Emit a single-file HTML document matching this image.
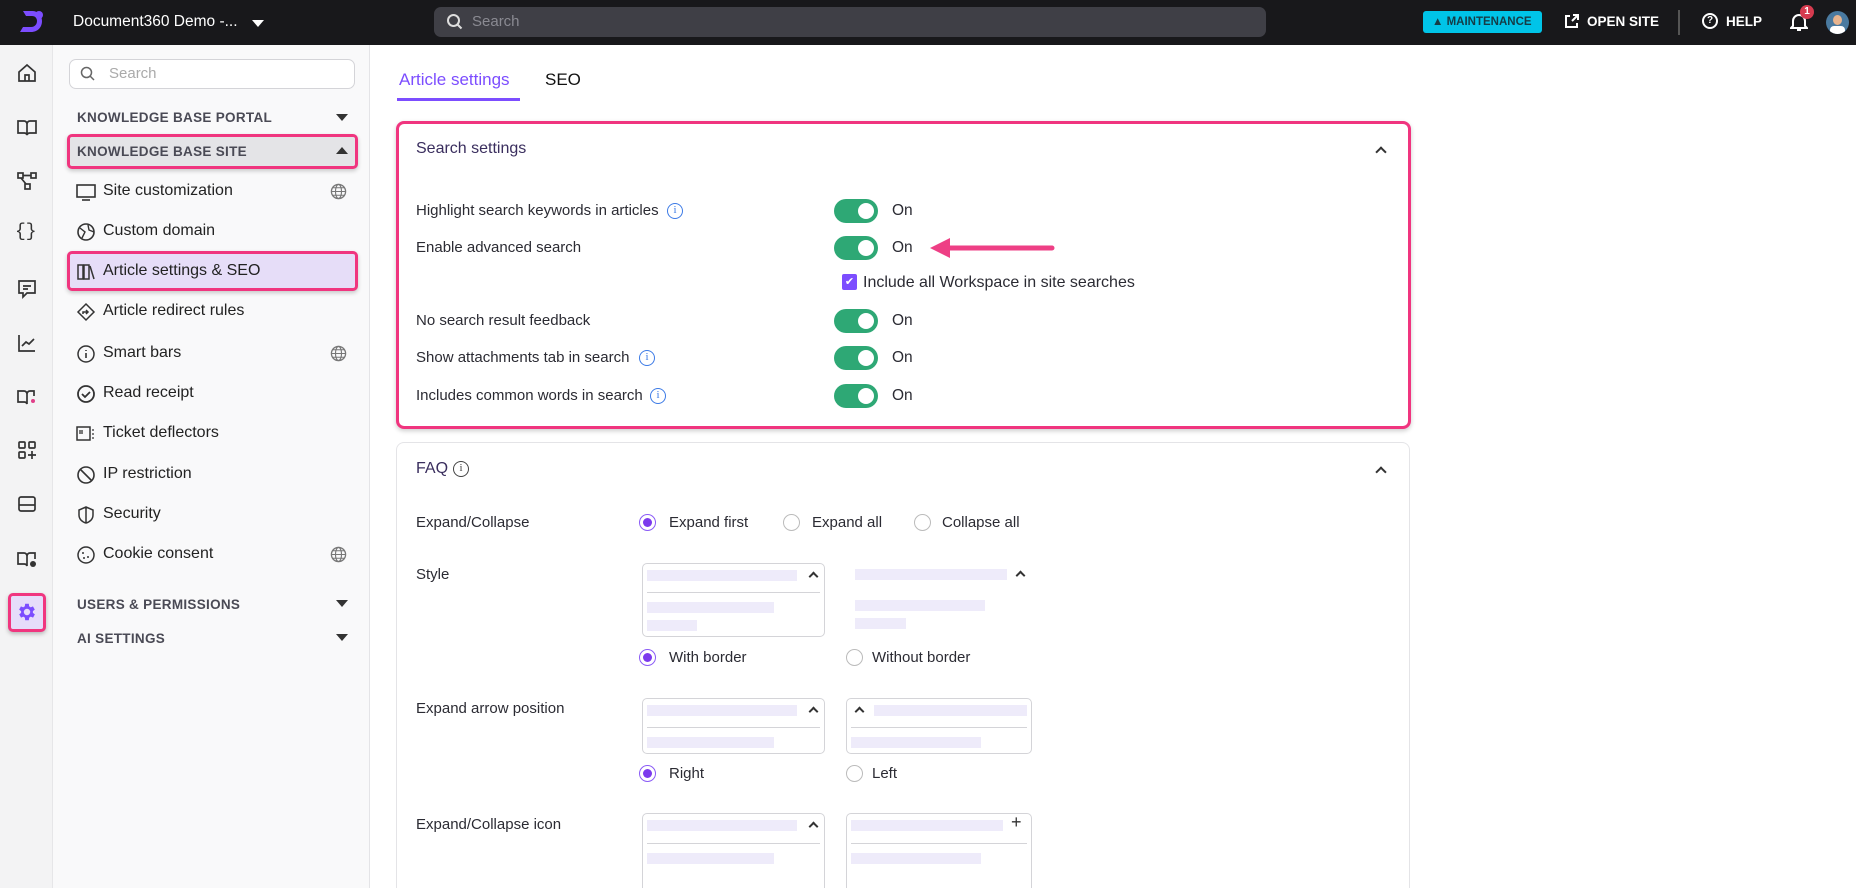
<!DOCTYPE html>
<html><head><meta charset="utf-8"><style>
*{box-sizing:border-box;margin:0;padding:0}
html,body{width:1856px;height:888px;overflow:hidden}
body{background:#fff;font-family:"Liberation Sans",sans-serif;color:#2b2b33;position:relative}
.a{position:absolute}
.top{left:0;top:0;width:1856px;height:45px;background:#18181b}
.rail{left:0;top:45px;width:53px;height:843px;background:#f3f3f4;border-right:1px solid #e6e6e8}
.side{left:53px;top:45px;width:317px;height:843px;background:#f9f9fa;border-right:1px solid #e4e4e7}
.hd{font-size:13.5px;font-weight:bold;color:#4a4a55;letter-spacing:.3px}
.it{font-size:16px;color:#222;left:103px}
.ic{left:76px;width:20px;height:20px}
.tri{width:0;height:0;border-left:6px solid transparent;border-right:6px solid transparent;border-top:7px solid #333}
.triu{width:0;height:0;border-left:6px solid transparent;border-right:6px solid transparent;border-bottom:7px solid #333}
.glb{left:330px;width:17px;height:17px}
.lbl{font-size:15px;color:#2b2b33}
.tg{left:834px;width:44px;height:24px;border-radius:12px;background:#2ea875}
.tg:after{content:"";position:absolute;right:4px;top:4px;width:16px;height:16px;border-radius:50%;background:#fff}
.on{left:892px;font-size:15.5px}
.inf{width:16px;height:16px;border:1.5px solid #3d7be6;border-radius:50%;color:#3d7be6;font-size:11px;text-align:center;line-height:13px;font-family:"Liberation Serif",serif}
.rd{width:17px;height:17px;border-radius:50%;border:1.5px solid #bbb;background:#fff}
.rd.s{border:1.5px solid #8b5cf6}
.rd.s:after{content:"";position:absolute;left:2.5px;top:2.5px;width:9px;height:9px;border-radius:50%;background:#7c3aed}
.bx{border:1.5px solid #d4d4d8;border-radius:5px}
.bar{background:#eeebfa;height:11px}
.ln{height:1px;background:#d4d4d8}
.chev{width:8px;height:8px;border-left:2px solid #333;border-top:2px solid #333;transform:rotate(45deg)}
.ri{left:16px;width:22px;height:22px}
</style></head><body>
<div class="a top"></div>
<svg class="a" style="left:18px;top:9px" width="28" height="26" viewBox="0 0 28 26"><path d="M5 2h9c6 0 10 4 10 10s-4 11-11 11H2l3-5h8c4 0 6-3 6-6s-2-5-5-5H8z" fill="#7c4dff"/><circle cx="21" cy="6" r="4" fill="#7c4dff"/></svg>
<div class="a" style="left:73px;top:13px;color:#fff;font-size:15.5px">Document360 Demo -...</div>
<div class="a tri" style="left:252px;top:20px;border-top-color:#fff"></div>
<div class="a" style="left:434px;top:7px;width:832px;height:30px;background:#3f3f46;border-radius:7px"></div>
<svg class="a" style="left:446px;top:13px" width="18" height="18"><circle cx="7.5" cy="7.5" r="5.5" stroke="#ddd" stroke-width="2" fill="none"/><path d="M11.5 11.5l4 4" stroke="#ddd" stroke-width="2"/></svg>
<div class="a" style="left:472px;top:13px;color:#8a8a92;font-size:15px">Search</div>
<div class="a" style="left:1423px;top:11px;width:119px;height:22px;background:#00c4e8;border-radius:3px;font-size:11.5px;font-weight:bold;color:#153c46;line-height:22px;padding-left:9px">▲ MAINTENANCE</div>
<svg class="a" style="left:1564px;top:14px" width="15" height="15"><path d="M6 2H2v11h11V9M8 7l6-6M9 1h5v5" stroke="#fff" stroke-width="2" fill="none"/></svg>
<div class="a" style="left:1587px;top:14px;color:#fff;font-size:13.5px;font-weight:bold">OPEN SITE</div>
<div class="a" style="left:1678px;top:10px;width:2px;height:25px;background:#555"></div>
<div class="a" style="left:1702px;top:13px;width:16px;height:16px;border:2px solid #fff;border-radius:50%;color:#fff;font-size:10px;font-weight:bold;text-align:center;line-height:12px">?</div>
<div class="a" style="left:1726px;top:14px;color:#fff;font-size:13.5px;font-weight:bold">HELP</div>
<svg class="a" style="left:1790px;top:12px" width="18" height="20"><path d="M3 14V9a6 6 0 0112 0v5l2 2H1zM7 18h4" stroke="#fff" stroke-width="2" fill="none"/></svg>
<div class="a" style="left:1800px;top:5px;width:14px;height:14px;border-radius:50%;background:#d63b4f;color:#fff;font-size:10px;text-align:center;line-height:14px;font-weight:bold">1</div>
<div class="a" style="left:1826px;top:11px;width:23px;height:23px;border-radius:50%;background:#4a7aa0;overflow:hidden"><div class="a" style="left:7px;top:4px;width:9px;height:10px;border-radius:50%;background:#e8b48e"></div><div class="a" style="left:4px;top:15px;width:15px;height:10px;background:#fff;border-radius:4px"></div></div>

<div class="a rail"></div>
<svg class="a ri" style="top:62px" viewBox="0 0 22 22"><path d="M3 10l8-7 8 7v9H3zM9 19v-6h4v6" stroke="#333" stroke-width="1.7" fill="none"/></svg>
<svg class="a ri" style="top:116px" viewBox="0 0 22 22"><path d="M2 5h6a3 3 0 013 3v11a3 3 0 00-3-2H2zM20 5h-6a3 3 0 00-3 3v11a3 3 0 013-2h6z" stroke="#333" stroke-width="1.7" fill="none"/></svg>
<svg class="a ri" style="top:170px" viewBox="0 0 22 22"><rect x="2" y="3" width="5" height="5" stroke="#333" stroke-width="1.7" fill="none"/><rect x="15" y="3" width="5" height="5" stroke="#333" stroke-width="1.7" fill="none"/><rect x="9" y="14" width="5" height="5" stroke="#333" stroke-width="1.7" fill="none"/><path d="M7 5.5h8M5 8l5 6" stroke="#333" stroke-width="1.7"/></svg>
<div class="a" style="left:15px;top:222px;font-size:18px;color:#333;font-family:'Liberation Mono',monospace">{}</div>
<svg class="a ri" style="top:278px" viewBox="0 0 22 22"><path d="M3 3h16v12h-8l-4 4v-4H3z M7 8h8M7 11h5" stroke="#333" stroke-width="1.7" fill="none"/></svg>
<svg class="a ri" style="top:332px" viewBox="0 0 22 22"><path d="M3 3v16h16M6 14l4-4 3 2 5-5" stroke="#333" stroke-width="1.7" fill="none"/></svg>
<svg class="a ri" style="top:386px" viewBox="0 0 22 22"><path d="M2 5h6a3 3 0 013 3v10a3 3 0 00-3-2H2zM11 8a3 3 0 013-3h4v5" stroke="#333" stroke-width="1.7" fill="none"/><circle cx="17" cy="15" r="2" fill="#e0408a"/></svg>
<svg class="a ri" style="top:439px" viewBox="0 0 22 22"><rect x="3" y="3" width="6" height="6" stroke="#333" stroke-width="1.7" fill="none" rx="1"/><rect x="13" y="3" width="6" height="6" stroke="#333" stroke-width="1.7" fill="none" rx="1"/><rect x="3" y="13" width="6" height="6" stroke="#333" stroke-width="1.7" fill="none" rx="1"/><path d="M16 12v8M12 16h8" stroke="#333" stroke-width="1.7"/></svg>
<svg class="a ri" style="top:493px" viewBox="0 0 22 22"><rect x="3" y="4" width="16" height="14" rx="2" stroke="#333" stroke-width="1.7" fill="none"/><path d="M3 12h16" stroke="#333" stroke-width="1.7"/></svg>
<svg class="a ri" style="top:548px" viewBox="0 0 22 22"><path d="M2 5h6a3 3 0 013 3v10a3 3 0 00-3-2H2zM11 8a3 3 0 013-3h5v6" stroke="#333" stroke-width="1.7" fill="none"/><circle cx="17" cy="16" r="3" fill="#333"/></svg>
<div class="a" style="left:8px;top:593px;width:38px;height:39px;border:3px solid #f0357f;border-radius:5px;background:#e6dcfa;box-shadow:0 2px 4px rgba(0,0,0,.25)"></div>
<svg class="a" style="left:16px;top:601px" width="22" height="22" viewBox="0 0 24 24"><path fill="#7c4dff" d="M19.4 13a7.5 7.5 0 000-2l2.1-1.6-2-3.5-2.5 1a7.3 7.3 0 00-1.7-1L15 3h-4l-.4 2.9a7.3 7.3 0 00-1.7 1l-2.5-1-2 3.5L6.6 11a7.5 7.5 0 000 2l-2.1 1.6 2 3.5 2.5-1a7.3 7.3 0 001.7 1L11 21h4l.4-2.9a7.3 7.3 0 001.7-1l2.5 1 2-3.5zM13 15.5a3.5 3.5 0 110-7 3.5 3.5 0 010 7z" transform="translate(-1 0)"/></svg>

<div class="a side"></div>
<div class="a" style="left:69px;top:59px;width:286px;height:30px;border:1px solid #d4d4d8;border-radius:7px;background:#fff"></div>
<svg class="a" style="left:80px;top:66px" width="16" height="16"><circle cx="6.5" cy="6.5" r="5" stroke="#666" stroke-width="1.5" fill="none"/><path d="M10 10l4 4" stroke="#666" stroke-width="1.5"/></svg>
<div class="a" style="left:109px;top:65px;color:#aaa;font-size:15px">Search</div>
<div class="a hd" style="left:77px;top:110px">KNOWLEDGE BASE PORTAL</div>
<div class="a tri" style="left:336px;top:114px"></div>
<div class="a" style="left:67px;top:134px;width:291px;height:35px;background:#e4e4e7;border:3px solid #f0357f;border-radius:5px;box-shadow:0 2px 4px rgba(0,0,0,.2)"></div>
<div class="a hd" style="left:77px;top:144px">KNOWLEDGE BASE SITE</div>
<div class="a triu" style="left:336px;top:147px"></div>
<div class="a" style="left:67px;top:251px;width:291px;height:40px;background:#e6ddf8;border:3px solid #f0357f;border-radius:5px;box-shadow:0 2px 4px rgba(0,0,0,.2)"></div>
<div class="a it" style="top:182px">Site customization</div>
<div class="a it" style="top:222px">Custom domain</div>
<div class="a it" style="top:262px">Article settings &amp; SEO</div>
<div class="a it" style="top:302px">Article redirect rules</div>
<div class="a it" style="top:344px">Smart bars</div>
<div class="a it" style="top:384px">Read receipt</div>
<div class="a it" style="top:424px">Ticket deflectors</div>
<div class="a it" style="top:465px">IP restriction</div>
<div class="a it" style="top:505px">Security</div>
<div class="a it" style="top:545px">Cookie consent</div>
<svg class="a glb" style="top:183px" viewBox="0 0 18 18"><circle cx="9" cy="9" r="7.5" stroke="#777" stroke-width="1.4" fill="none"/><ellipse cx="9" cy="9" rx="3.2" ry="7.5" stroke="#777" stroke-width="1.2" fill="none"/><path d="M1.5 9h15M3 5h12M3 13h12" stroke="#777" stroke-width="1.1"/></svg>
<svg class="a glb" style="top:345px" viewBox="0 0 18 18"><circle cx="9" cy="9" r="7.5" stroke="#777" stroke-width="1.4" fill="none"/><ellipse cx="9" cy="9" rx="3.2" ry="7.5" stroke="#777" stroke-width="1.2" fill="none"/><path d="M1.5 9h15M3 5h12M3 13h12" stroke="#777" stroke-width="1.1"/></svg>
<svg class="a glb" style="top:546px" viewBox="0 0 18 18"><circle cx="9" cy="9" r="7.5" stroke="#777" stroke-width="1.4" fill="none"/><ellipse cx="9" cy="9" rx="3.2" ry="7.5" stroke="#777" stroke-width="1.2" fill="none"/><path d="M1.5 9h15M3 5h12M3 13h12" stroke="#777" stroke-width="1.1"/></svg>
<svg class="a ic" style="top:182px" viewBox="0 0 20 20"><rect x="1" y="3" width="18" height="12" stroke="#333" stroke-width="1.6" fill="none"/><path d="M6 18h8" stroke="#333" stroke-width="1.6"/></svg>
<svg class="a ic" style="top:222px" viewBox="0 0 20 20"><circle cx="10" cy="10" r="8" stroke="#333" stroke-width="1.6" fill="none"/><path d="M4 6l5 4-3 6M12 3l1 5 5 2" stroke="#333" stroke-width="1.4" fill="none"/></svg>
<svg class="a ic" style="top:262px" viewBox="0 0 20 20"><rect x="2" y="3" width="5" height="14" stroke="#333" stroke-width="1.5" fill="none"/><rect x="8" y="3" width="5" height="14" stroke="#333" stroke-width="1.5" fill="none"/><path d="M14 4l4 13" stroke="#333" stroke-width="1.5"/></svg>
<svg class="a ic" style="top:302px" viewBox="0 0 20 20"><path d="M10 2l8 8-8 8-8-8z M7 12v-2h5M10 8l2 2-2 2" stroke="#333" stroke-width="1.5" fill="none"/></svg>
<svg class="a ic" style="top:344px" viewBox="0 0 20 20"><circle cx="10" cy="10" r="8" stroke="#333" stroke-width="1.5" fill="none"/><path d="M10 9v5M10 6v1" stroke="#333" stroke-width="1.6"/></svg>
<svg class="a ic" style="top:384px" viewBox="0 0 20 20"><circle cx="10" cy="10" r="8" stroke="#333" stroke-width="1.8" fill="none"/><path d="M6 10l3 3 5-5" stroke="#333" stroke-width="1.8" fill="none"/></svg>
<svg class="a ic" style="top:424px" viewBox="0 0 20 20"><rect x="1" y="3" width="13" height="13" stroke="#333" stroke-width="1.5" fill="none"/><path d="M4 6v4M6 6v4M16 6h2M16 10h2M16 14h2" stroke="#333" stroke-width="1.3"/></svg>
<svg class="a ic" style="top:465px" viewBox="0 0 20 20"><circle cx="10" cy="10" r="8" stroke="#333" stroke-width="1.6" fill="none"/><path d="M4.5 4.5l11 11" stroke="#333" stroke-width="1.6"/></svg>
<svg class="a ic" style="top:505px" viewBox="0 0 20 20"><path d="M10 2l7 3v5c0 4-3 7-7 8-4-1-7-4-7-8V5zM10 2v16" stroke="#333" stroke-width="1.5" fill="none"/></svg>
<svg class="a ic" style="top:545px" viewBox="0 0 20 20"><circle cx="10" cy="10" r="8" stroke="#333" stroke-width="1.5" fill="none"/><circle cx="7" cy="8" r="1" fill="#333"/><circle cx="12" cy="12" r="1" fill="#333"/><circle cx="8" cy="13" r="1" fill="#333"/></svg>
<div class="a hd" style="left:77px;top:597px">USERS &amp; PERMISSIONS</div><div class="a tri" style="left:336px;top:600px"></div>
<div class="a hd" style="left:77px;top:631px">AI SETTINGS</div><div class="a tri" style="left:336px;top:634px"></div>

<div class="a" style="left:399px;top:70px;font-size:17px;color:#7c4dff">Article settings</div>
<div class="a" style="left:397px;top:98px;width:123px;height:3px;background:#7c4dff"></div>
<div class="a" style="left:545px;top:70px;font-size:17px;color:#111">SEO</div>

<div class="a" style="left:396px;top:121px;width:1015px;height:308px;border:3px solid #f0357f;border-radius:8px;box-shadow:0 2px 5px rgba(0,0,0,.2)"></div>
<div class="a" style="left:416px;top:140px;font-size:16px;color:#3a2e5e">Search settings</div>
<div class="a chev" style="left:1377px;top:148px"></div>
<div class="a lbl" style="left:416px;top:202px">Highlight search keywords in articles</div><div class="a inf" style="left:667px;top:203px">i</div>
<div class="a tg" style="top:199px"></div><div class="a on" style="top:202px">On</div>
<div class="a lbl" style="left:416px;top:239px">Enable advanced search</div>
<div class="a tg" style="top:236px"></div><div class="a on" style="top:239px">On</div>
<svg class="a" style="left:928px;top:236px" width="130" height="24"><path d="M12 12h112" stroke="#ee3f85" stroke-width="5" stroke-linecap="round"/><path d="M2 12l20-10v20z" fill="#ee3f85"/></svg>
<div class="a" style="left:842px;top:274px;width:15px;height:16px;background:#7c4dff;border-radius:2px;color:#fff;font-size:11px;text-align:center;line-height:16px">✔</div>
<div class="a lbl" style="left:863px;top:274px;font-size:16px">Include all Workspace in site searches</div>
<div class="a lbl" style="left:416px;top:312px">No search result feedback</div>
<div class="a tg" style="top:309px"></div><div class="a on" style="top:312px">On</div>
<div class="a lbl" style="left:416px;top:349px">Show attachments tab in search</div><div class="a inf" style="left:639px;top:350px">i</div>
<div class="a tg" style="top:346px"></div><div class="a on" style="top:349px">On</div>
<div class="a lbl" style="left:416px;top:387px">Includes common words in search</div><div class="a inf" style="left:650px;top:388px">i</div>
<div class="a tg" style="top:384px"></div><div class="a on" style="top:387px">On</div>

<div class="a" style="left:396px;top:442px;width:1014px;height:446px;border:1px solid #e4e4e7;border-bottom:none;border-radius:8px 8px 0 0"></div>
<div class="a" style="left:416px;top:460px;font-size:16px;color:#3a2e5e">FAQ</div><div class="a inf" style="left:453px;top:461px;border-color:#444;color:#444">i</div>
<div class="a chev" style="left:1377px;top:468px"></div>
<div class="a lbl" style="left:416px;top:514px">Expand/Collapse</div>
<div class="a rd s" style="left:639px;top:514px"></div><div class="a lbl" style="left:669px;top:514px">Expand first</div>
<div class="a rd" style="left:783px;top:514px"></div><div class="a lbl" style="left:812px;top:514px">Expand all</div>
<div class="a rd" style="left:914px;top:514px"></div><div class="a lbl" style="left:942px;top:514px">Collapse all</div>
<div class="a lbl" style="left:416px;top:566px">Style</div>
<div class="a bx" style="left:642px;top:563px;width:183px;height:74px"></div>
<div class="a bar" style="left:647px;top:570px;width:150px"></div><div class="a chev" style="left:810px;top:573px;width:7px;height:7px"></div>
<div class="a ln" style="left:647px;top:592px;width:173px"></div>
<div class="a bar" style="left:647px;top:602px;width:127px"></div><div class="a bar" style="left:647px;top:620px;width:50px"></div>
<div class="a bar" style="left:855px;top:569px;width:152px"></div><div class="a chev" style="left:1017px;top:572px;width:7px;height:7px"></div>
<div class="a bar" style="left:855px;top:600px;width:130px"></div><div class="a bar" style="left:855px;top:618px;width:51px"></div>
<div class="a rd s" style="left:639px;top:649px"></div><div class="a lbl" style="left:669px;top:649px">With border</div>
<div class="a rd" style="left:846px;top:649px"></div><div class="a lbl" style="left:872px;top:649px">Without border</div>
<div class="a lbl" style="left:416px;top:700px">Expand arrow position</div>
<div class="a bx" style="left:642px;top:698px;width:183px;height:56px"></div>
<div class="a bar" style="left:647px;top:705px;width:150px"></div><div class="a chev" style="left:810px;top:708px;width:7px;height:7px"></div>
<div class="a ln" style="left:647px;top:727px;width:173px"></div><div class="a bar" style="left:647px;top:737px;width:127px"></div>
<div class="a bx" style="left:846px;top:698px;width:186px;height:56px"></div>
<div class="a chev" style="left:856px;top:708px;width:7px;height:7px"></div><div class="a bar" style="left:874px;top:705px;width:153px"></div>
<div class="a ln" style="left:851px;top:727px;width:176px"></div><div class="a bar" style="left:851px;top:737px;width:130px"></div>
<div class="a rd s" style="left:639px;top:765px"></div><div class="a lbl" style="left:669px;top:765px">Right</div>
<div class="a rd" style="left:846px;top:765px"></div><div class="a lbl" style="left:872px;top:765px">Left</div>
<div class="a lbl" style="left:416px;top:816px">Expand/Collapse icon</div>
<div class="a bx" style="left:642px;top:813px;width:183px;height:90px"></div>
<div class="a bar" style="left:647px;top:820px;width:150px"></div><div class="a chev" style="left:810px;top:823px;width:7px;height:7px"></div>
<div class="a ln" style="left:647px;top:843px;width:173px"></div><div class="a bar" style="left:647px;top:853px;width:127px"></div>
<div class="a bx" style="left:846px;top:813px;width:186px;height:90px"></div>
<div class="a bar" style="left:851px;top:820px;width:152px"></div><div class="a" style="left:1011px;top:812px;font-size:18px;color:#333">+</div>
<div class="a ln" style="left:851px;top:843px;width:176px"></div><div class="a bar" style="left:851px;top:853px;width:130px"></div>
</body></html>
